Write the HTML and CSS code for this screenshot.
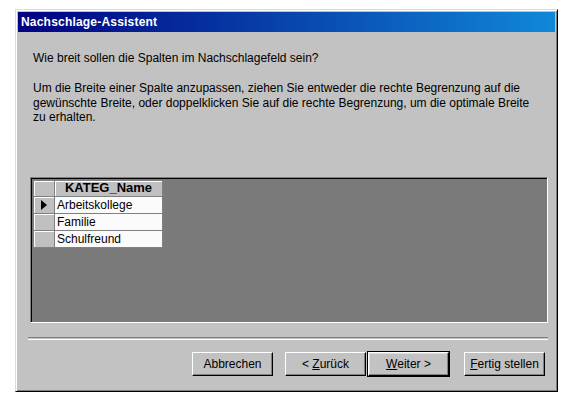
FILE: index.html
```html
<!DOCTYPE html>
<html>
  <head>
    <title>Nachschlage-Assistent</title>
    <meta charset="UTF-8"/>
    <link rel="stylesheet" href="styles.css">
  </head>
  <body>
    <div class="window">
      <div class="titlebar">Nachschlage-Assistent</div>
      <div class="content">
        <p class="question">Wie breit sollen die Spalten im Nachschlagefeld sein?</p>
        <p class="hint">Um die Breite einer Spalte anzupassen, ziehen Sie entweder die rechte Begrenzung auf die<br>gewünschte Breite, oder doppelklicken Sie auf die rechte Begrenzung, um die optimale Breite<br>zu erhalten.</p>
        <div class="grid">
          <table class="sheet">
            <tr>
              <th class="sel"></th>
              <th class="col">KATEG_Name</th>
            </tr>
            <tr>
              <td class="sel"><span class="arrow"></span></td>
              <td class="cell">Arbeitskollege</td>
            </tr>
            <tr>
              <td class="sel"></td>
              <td class="cell">Familie</td>
            </tr>
            <tr>
              <td class="sel"></td>
              <td class="cell">Schulfreund</td>
            </tr>
          </table>
        </div>
        <div class="separator"></div>
        <div class="buttons">
          <button class="btn">Abbrechen</button>
          <div class="nav">
            <button class="btn">&lt; <u>Z</u>urück</button>
            <button class="btn default"><u>W</u>eiter &gt;</button>
          </div>
          <button class="btn"><u>F</u>ertig stellen</button>
        </div>
      </div>
    </div>
  </body>
</html>
```

FILE: styles.css
```css
body {
  margin: 0;
  background: #fff;
  font-family: 'Liberation Sans', Arial, sans-serif;
  font-size: 12px;
  color: #000;
}
.window {
  margin: 9px 0 0 15px;
  width: 537px;
  height: 377px;
  padding: 2px;
  border: 1px solid;
  border-color: #dcdcdc #000 #000 #dcdcdc;
  box-shadow: inset 1px 1px #fff, inset -1px -1px #808080;
  background: #c2c2c2;
}
.titlebar {
  height: 20px;
  line-height: 20px;
  padding-left: 3px;
  background: linear-gradient(to right, #000080, #1088d8);
  color: #fff;
  font-weight: bold;
  font-size: 12px;
  letter-spacing: 0.2px;
}
.content {
  padding: 0 7px 0 12px;
}
.question {
  margin: 19px 0 0 3px;
  line-height: 14px;
}
.hint {
  margin: 16px 0 0 3px;
  line-height: 14.5px;
}
.grid {
  margin-top: 52px;
  height: 142px;
  border: 1px solid;
  border-color: #808080 #fff #fff #808080;
  box-shadow: inset 1px 1px #000;
  padding: 2px 0 0 2px;
  background: #7a7a7a;
}
.sheet {
  border-collapse: collapse;
  font-size: 12px;
}
.sheet th, .sheet td {
  padding: 0;
  border: 1px solid #808080;
}
.sheet th {
  height: 15px;
  background: #c0c0c0;
  box-shadow: inset 1px 1px #fff;
}
.sel {
  width: 20px;
  height: 16px;
  background: #c0c0c0;
  box-shadow: inset 1px 1px #fff;
}
.col {
  width: 107px;
  font-weight: bold;
  font-size: 13px;
  line-height: 14px;
  text-align: center;
}
.cell {
  background: #fbfbfb;
  padding-left: 2px !important;
}
.arrow {
  display: block;
  width: 0;
  height: 0;
  margin-left: 7px;
  border-top: 5px solid transparent;
  border-bottom: 5px solid transparent;
  border-left: 6px solid #000;
}
.separator {
  margin: 14px 0 0 -2px;
  height: 1px;
  border-top: 1px solid #808080;
  border-bottom: 1px solid #fff;
}
.buttons {
  display: flex;
  align-items: center;
  margin: 12px 0 0 162px;
}
.nav {
  display: flex;
  margin-left: 12px;
  margin-right: 15px;
}
.nav .btn + .btn {
  margin-left: 2px;
}
.btn {
  width: 81px;
  height: 24px;
  padding: 0;
  font-family: inherit;
  font-size: 12px;
  color: #000;
  background: #c2c2c2;
  border: 1px solid;
  border-color: #fff #000 #000 #fff;
  box-shadow: inset -1px -1px #808080;
}
.btn.default {
  outline: 1px solid #000;
  box-shadow: inset -1px -1px #808080, inset 1px 1px #dcdcdc;
}
```
